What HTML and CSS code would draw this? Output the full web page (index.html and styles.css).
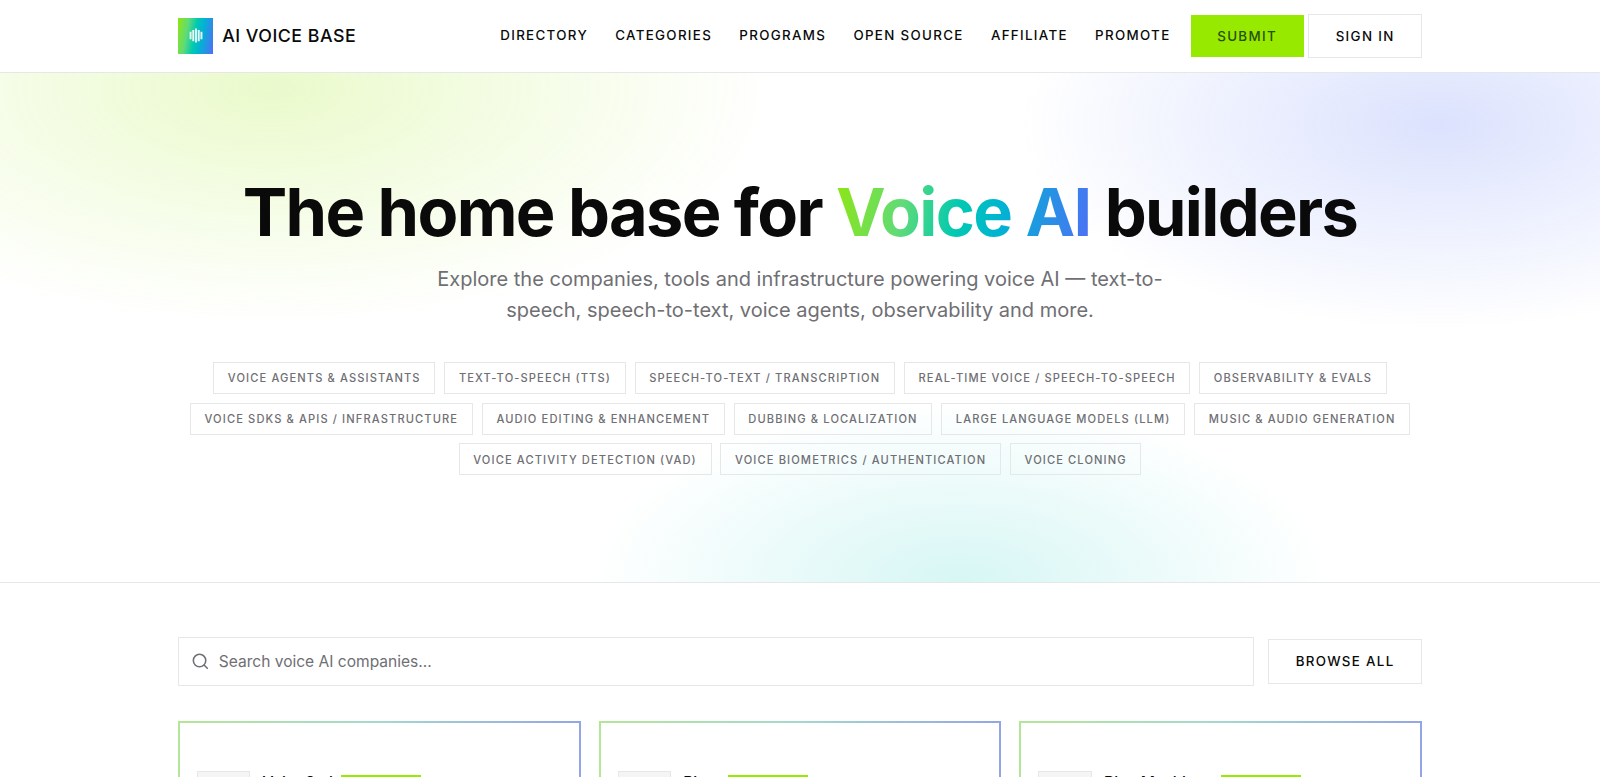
FILE: index.html
```html
<!DOCTYPE html>
<html lang="en">
  <head>
    <meta charset="UTF-8" />
    <title>AI Voice Base</title>
    <link rel="stylesheet" href="styles.css">
  </head>
  <body>
    <header class="header">
      <div class="container header__inner">
        <a href="#" class="brand">
          <span class="brand__logo">
            <svg class="brand__icon" viewBox="0 0 14 16" fill="none" stroke="#fff" stroke-opacity="0.9" stroke-width="2.1">
              <path d="M1.2 4v8M4.1 2v12M7 .5v15M9.9 2v12M12.8 4v8" />
            </svg>
          </span>
          <span class="brand__name">AI VOICE BASE</span>
        </a>
        <nav class="nav">
          <a href="#" class="nav__link">Directory</a>
          <a href="#" class="nav__link">Categories</a>
          <a href="#" class="nav__link">Programs</a>
          <a href="#" class="nav__link">Open Source</a>
          <a href="#" class="nav__link">Affiliate</a>
          <a href="#" class="nav__link">Promote</a>
          <a href="#" class="button button--primary nav__submit">Submit</a>
          <a href="#" class="button button--outline nav__signin">Sign in</a>
        </nav>
      </div>
    </header>
    <main>
      <section class="hero">
        <div class="container">
          <h1 class="hero__title">The home base for <span class="hero__accent">Voice AI</span> builders</h1>
          <p class="hero__text">Explore the companies, tools and infrastructure powering voice AI — text-to-speech, speech-to-text, voice agents, observability and more.</p>
          <div class="chips">
            <a href="#" class="chip">Voice Agents &amp; Assistants</a>
            <a href="#" class="chip">Text-to-Speech (TTS)</a>
            <a href="#" class="chip">Speech-to-Text / Transcription</a>
            <a href="#" class="chip">Real-time Voice / Speech-to-Speech</a>
            <a href="#" class="chip">Observability &amp; Evals</a>
            <a href="#" class="chip">Voice SDKs &amp; APIs / Infrastructure</a>
            <a href="#" class="chip">Audio Editing &amp; Enhancement</a>
            <a href="#" class="chip">Dubbing &amp; Localization</a>
            <a href="#" class="chip">Large Language Models (LLM)</a>
            <a href="#" class="chip">Music &amp; Audio Generation</a>
            <a href="#" class="chip">Voice Activity Detection (VAD)</a>
            <a href="#" class="chip">Voice Biometrics / Authentication</a>
            <a href="#" class="chip">Voice Cloning</a>
          </div>
        </div>
      </section>
      <section class="container directory">
        <form class="search">
          <label class="search__field">
            <svg class="search__icon" viewBox="0 0 24 24" fill="none" stroke="currentColor" stroke-width="2" stroke-linecap="round" stroke-linejoin="round">
              <circle cx="11" cy="11" r="8" />
              <path d="m21 21-4.3-4.3" />
            </svg>
            <input type="text" class="search__input" placeholder="Search voice AI companies..." />
          </label>
          <a href="#" class="button button--outline">Browse all</a>
        </form>
        <div class="cards">
          <article class="card">
            <div class="card__logo"></div>
            <h2 class="card__name">VoiceOwl</h2>
            <span class="card__badge">Featured</span>
          </article>
          <article class="card">
            <div class="card__logo"></div>
            <h2 class="card__name">Rime</h2>
            <span class="card__badge">Featured</span>
          </article>
          <article class="card">
            <div class="card__logo"></div>
            <h2 class="card__name">Blue Machines</h2>
            <span class="card__badge">Featured</span>
          </article>
        </div>
      </section>
    </main>
  </body>
</html>
```
FILE: styles.css
```css
:root {
  --color-text: #0a0a0a;
  --color-muted: #6f6f74;
  --color-border: #e5e7e8;
  --color-lime: #98e900;
  --gradient: linear-gradient(100deg, #90e610 0%, #5fdb78 27%, #00c9b1 48%, #00b4d2 64%, #4f6ef7 100%);
  font-size: 17.7778px;
}
* {
  margin: 0;
  padding: 0;
  box-sizing: border-box;
}
body {
  height: 100vh;
  overflow: hidden;
  font-family: Inter, "Liberation Sans", sans-serif;
  line-height: 1.5;
  color: var(--color-text);
  background-color: #fff;
}
a {
  color: inherit;
  text-decoration: none;
}
.container {
  width: 70rem;
  margin: 0 auto;
}
/* header */
.header {
  border-bottom: 1px solid var(--color-border);
}
.header__inner {
  display: flex;
  align-items: center;
  justify-content: space-between;
  height: 71.6px;
}
.brand {
  display: flex;
  align-items: center;
  gap: 0.5rem;
}
.brand__logo {
  display: flex;
  align-items: center;
  justify-content: center;
  width: 2rem;
  height: 2rem;
  background: var(--gradient);
}
.brand__icon {
  width: 14px;
  height: 15px;
}
.brand__name {
  padding-top: 1px;
  font-size: 1rem;
  font-weight: 500;
  letter-spacing: 0.028em;
}
.nav {
  display: flex;
  align-items: center;
}
.nav__link {
  margin-right: 1.53rem;
  padding-top: 1px;
  font-size: 0.75rem;
  font-weight: 500;
  letter-spacing: 0.1em;
  text-transform: uppercase;
}
.nav__submit {
  margin-left: -0.405rem;
}
.nav__signin {
  margin-left: 0.25rem;
}
/* buttons */
.button {
  padding: 0.5625rem 1.5rem;
  font-size: 0.75rem;
  font-weight: 500;
  letter-spacing: 0.1em;
  line-height: 1.25rem;
  white-space: nowrap;
  text-transform: uppercase;
}
.button--primary {
  color: #27500a;
  background-color: var(--color-lime);
}
.button--outline {
  border: 1px solid var(--color-border);
  background-color: #fff;
}
/* hero */
.hero {
  padding: 106.9px 0 6rem;
  border-bottom: 1px solid var(--color-border);
  text-align: center;
  background:
    radial-gradient(ellipse 500px 235px at 17% 3%, rgba(152, 230, 0, 0.2), transparent),
    radial-gradient(ellipse 420px 205px at 90% 10%, rgba(79, 110, 247, 0.2), transparent),
    radial-gradient(ellipse 370px 180px at 60% 100%, rgba(0, 201, 190, 0.16), transparent);
}
.hero__title {
  font-size: 3.75rem;
  font-weight: 700;
  line-height: 1;
  letter-spacing: -0.025em;
}
.hero__accent {
  color: transparent;
  background: var(--gradient);
  background-clip: text;
  -webkit-background-clip: text;
}
.hero__text {
  width: 42rem;
  margin: 1rem auto 0;
  font-size: 1.125rem;
  line-height: 1.75rem;
  color: var(--color-muted);
}
.chips {
  display: flex;
  flex-wrap: wrap;
  justify-content: center;
  gap: 0.5rem;
  margin-top: 2rem;
}
.chip {
  padding: 0.4rem 0.77rem 0.35rem;
  border: 1px solid var(--color-border);
  font-size: 0.625rem;
  font-weight: 500;
  letter-spacing: 0.101em;
  text-transform: uppercase;
  color: var(--color-muted);
}
/* search */
.directory {
  padding-top: 54px;
}
.search {
  display: flex;
  align-items: center;
  gap: 0.8rem;
}
.search__field {
  display: flex;
  flex: 1;
  align-items: center;
  gap: 0.5rem;
  height: 2.75rem;
  padding: 0 0.7rem;
  border: 1px solid var(--color-border);
  color: var(--color-muted);
}
.search__icon {
  width: 1.05rem;
  height: 1.05rem;
}
.search__input {
  flex: 1;
  border: none;
  outline: none;
  font: inherit;
  font-size: 0.875rem;
  background: none;
}
.search__input::placeholder {
  color: var(--color-muted);
}
/* cards */
.cards {
  display: grid;
  grid-template-columns: repeat(3, 1fr);
  gap: 1rem;
  margin-top: 35px;
}
.card {
  display: flex;
  align-items: flex-start;
  height: 13rem;
  padding: 48px 17px 1rem;
  border: 2px solid transparent;
  background:
    linear-gradient(#fff, #fff) padding-box,
    linear-gradient(90deg, #b4e697, #a5d8cf 50%, #94a5e6) border-box;
}
.card__logo {
  width: 3rem;
  height: 3rem;
  border: 1px solid var(--color-border);
  background-color: #f5f5f5;
}
.card__name {
  margin: 1.4px 0 0 0.7rem;
  font-size: 0.875rem;
  font-weight: 500;
  line-height: 1.25rem;
}
.card__badge {
  margin: 3.7px 0 0 0.45rem;
  padding: 0.125rem 0.5rem;
  font-size: 0.625rem;
  font-weight: 500;
  letter-spacing: 0.05em;
  text-transform: uppercase;
  color: #27500a;
  background-color: var(--color-lime);
}
```
